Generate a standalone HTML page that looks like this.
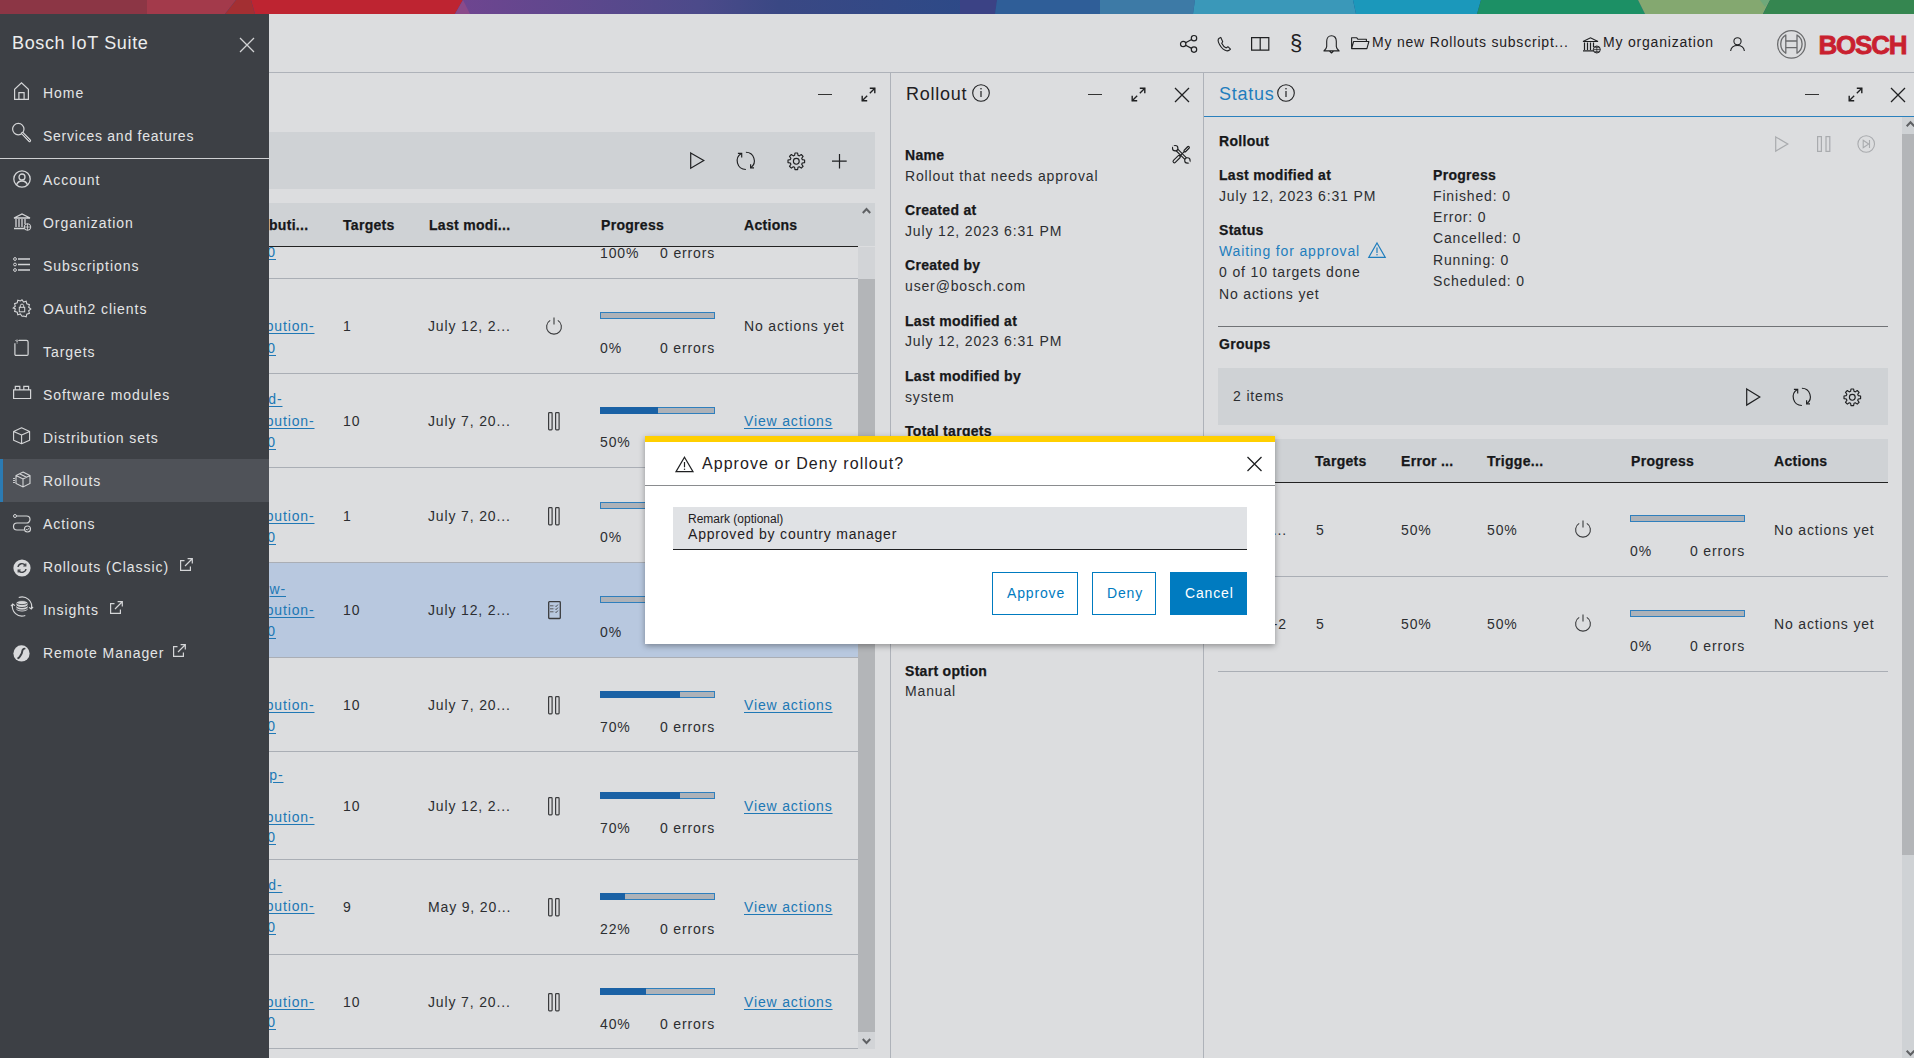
<!DOCTYPE html>
<html><head><meta charset="utf-8">
<style>
*{box-sizing:border-box;margin:0;padding:0}
html,body{width:1914px;height:1058px;overflow:hidden;background:#dcdddf;font-family:"Liberation Sans",sans-serif;color:#2c2e31}
.a{position:absolute}
.t{position:absolute;white-space:nowrap;font-size:14px;line-height:20px;letter-spacing:0.85px}
.b{font-weight:bold;letter-spacing:0.3px;color:#17181a;-webkit-text-stroke:0.25px #17181a}
.lnk{color:#2078b5;text-decoration:underline;text-underline-offset:2px}
svg{position:absolute;overflow:visible}
</style></head><body>
<!-- supergraphic -->
<svg class="a" style="left:0;top:0" width="1914" height="14">
<rect x="0" y="0" width="1914" height="14" fill="#2b4a88"/>
<rect x="0" y="0" width="150" height="14" fill="#8c3645"/>
<polygon points="147,0 236,0 225,14 147,14" fill="#a33a4b"/>
<polygon points="236,0 251,0 255,14 225,14" fill="#a32f32"/>
<polygon points="251,0 463,0 455,14 255,14" fill="#be2431"/>
<defs><linearGradient id="g1" x1="0" x2="1"><stop offset="0" stop-color="#6f4590"/><stop offset="0.45" stop-color="#4c4a8a"/><stop offset="0.6" stop-color="#3a4884"/><stop offset="1" stop-color="#2b4a88"/></linearGradient></defs>
<polygon points="463,0 995,0 995,14 455,14" fill="url(#g1)"/>
<polygon points="455,14 463,0 470,14" fill="#8a4a8a"/>
<polygon points="960,0 997,0 995,14 960,14" fill="#3b4285"/>
<polygon points="997,0 1100,0 1100,14 995,14" fill="#2f5e98"/>
<polygon points="1100,0 1195,0 1193,14 1100,14" fill="#3d7aa6"/>
<polygon points="1195,0 1353,0 1356,14 1193,14" fill="#3a98b9"/>
<polygon points="1353,0 1481,0 1477,14 1356,14" fill="#1b98bb"/>
<polygon points="1481,0 1638,0 1645,14 1477,14" fill="#1c9065"/>
<polygon points="1638,0 1770,0 1763,14 1645,14" fill="#84a870"/>
<polygon points="1760,0 1770,0 1765,7" fill="#6ea87a"/>
<polygon points="1770,0 1914,0 1914,14 1763,14" fill="#358650"/>
</svg>
<!-- header -->
<div class="a" style="left:0;top:14px;width:1914px;height:58px;background:#dcdddf"></div>
<div class="a" style="left:0;top:72px;width:1914px;height:1px;background:#aeb2b9"></div>
<!-- panel dividers -->
<div class="a" style="left:890px;top:73px;width:1px;height:985px;background:#aeb2b9"></div>
<div class="a" style="left:1203px;top:73px;width:1px;height:985px;background:#aeb2b9"></div>
<!-- sidebar -->


<!--P1-->
<div class="a" style="left:818px;top:94px;width:14px;height:1.3px;background:#333"></div>
<svg style="left:861px;top:87px" width="15" height="15"><path d="M1.2 13.8L6.2 8.8 M8.8 6.2L13.8 1.2" stroke="#1f2022" stroke-width="1.3"/><path d="M8.8 1.2h5v5 M1.2 8.8v5h5" fill="none" stroke="#1f2022" stroke-width="1.4"/></svg>
<div class="a" style="left:269px;top:132px;width:606px;height:57px;background:#cfd2d5"></div>
<svg style="left:690px;top:152px" width="15" height="18"><path d="M0.7 0.9L13.8 8.6 0.7 16.3z" fill="none" stroke="#1f2022" stroke-width="1.2" stroke-linejoin="miter"/></svg>
<svg style="left:736px;top:152px" width="19" height="19"><path d="M5.3 1.4A8.7 8.7 0 0 0 9.9 17.5 M9.9 0.3A8.5 8.5 0 0 1 14.9 15.6" fill="none" stroke="#1f2022" stroke-width="1.15"/><path d="M1.9 1.3H5.7V5.6 M14.6 12.2V15.8H18" fill="none" stroke="#1f2022" stroke-width="1.15"/></svg>
<svg style="left:787px;top:152px" width="19" height="19"><polygon points="7.59,3.34 7.99,1.00 10.61,1.00 11.01,3.34 12.31,3.88 14.24,2.50 16.10,4.36 14.72,6.29 15.26,7.59 17.60,7.99 17.60,10.61 15.26,11.01 14.72,12.31 16.10,14.24 14.24,16.10 12.31,14.72 11.01,15.26 10.61,17.60 7.99,17.60 7.59,15.26 6.29,14.72 4.36,16.10 2.50,14.24 3.88,12.31 3.34,11.01 1.00,10.61 1.00,7.99 3.34,7.59 3.88,6.29 2.50,4.36 4.36,2.50 6.29,3.88" fill="none" stroke="#1f2022" stroke-width="1.15" stroke-linejoin="round"/><circle cx="9.3" cy="9.3" r="2.9" fill="none" stroke="#1f2022" stroke-width="1.15"/></svg>
<svg style="left:832px;top:154px" width="15" height="15"><path d="M7.5 0v14.5M0 7.2h14.7" stroke="#1f2022" stroke-width="1.2"/></svg>
<div class="a" style="left:269px;top:203px;width:606px;height:43px;background:#cfd2d5"></div>
<div class="a" style="left:269px;top:246px;width:589px;height:1px;background:#222"></div>
<div class="t b" style="left:269px;top:215px">buti...</div>
<div class="t b" style="left:343px;top:215px">Targets</div>
<div class="t b" style="left:429px;top:215px">Last modi...</div>
<div class="t b" style="left:601px;top:215px">Progress</div>
<div class="t b" style="left:744px;top:215px">Actions</div>
<div class="a" style="left:858px;top:247px;width:17px;height:802px;background:#d2d4d7"></div>
<div class="a" style="left:858px;top:279px;width:17px;height:753px;background:#b3b5b8"></div>
<svg style="left:862px;top:207px" width="9" height="7"><path d="M0.8 6L4.5 2 8.2 6" fill="none" stroke="#5f6164" stroke-width="2"/></svg>
<svg style="left:862px;top:1038px" width="9" height="7"><path d="M0.8 1L4.5 5 8.2 1" fill="none" stroke="#5f6164" stroke-width="2"/></svg>
<div class="a" style="left:269px;top:278px;width:589px;height:1px;background:#aaaeb5"></div>
<div class="a" style="left:269px;top:373px;width:589px;height:1px;background:#aaaeb5"></div>
<div class="a" style="left:269px;top:467px;width:589px;height:1px;background:#aaaeb5"></div>
<div class="a" style="left:269px;top:562px;width:589px;height:1px;background:#aaaeb5"></div>
<div class="a" style="left:269px;top:657px;width:589px;height:1px;background:#aaaeb5"></div>
<div class="a" style="left:269px;top:751px;width:589px;height:1px;background:#aaaeb5"></div>
<div class="a" style="left:269px;top:859px;width:589px;height:1px;background:#aaaeb5"></div>
<div class="a" style="left:269px;top:954px;width:589px;height:1px;background:#aaaeb5"></div>
<div class="a" style="left:269px;top:1048px;width:589px;height:1px;background:#aaaeb5"></div>
<div class="a" style="left:269px;top:563px;width:589px;height:94px;background:#b8c8df"></div>
<div class="t lnk" style="right:1638px;top:242px">0</div>
<div class="t" style="left:600px;top:243px;">100%</div>
<div class="t" style="left:660px;top:243px;">0 errors</div>
<div class="t lnk" style="right:1599.5px;top:316px">bution-</div>
<div class="t lnk" style="right:1638px;top:338px">0</div>
<div class="t" style="left:343px;top:316px;">1</div>
<div class="t" style="left:428px;top:316px;">July 12, 2...</div>
<svg style="left:545px;top:317px" width="18" height="18"><path d="M5.2 3.4A7.4 7.4 0 1 0 12.8 3.4" fill="none" stroke="#3a3b3d" stroke-width="1.1"/><path d="M9 0.5v7" stroke="#3a3b3d" stroke-width="1.1"/></svg>
<div class="a" style="left:600px;top:312px;width:115px;height:7px;background:#aeb2b8;border:1px solid #2f7fbd"></div>
<div class="t" style="left:600px;top:338px;">0%</div>
<div class="t" style="right:1199px;top:338px">0 errors</div>
<div class="t" style="left:744px;top:316px;">No actions yet</div>
<div class="t lnk" style="right:1631.5px;top:389px">d-</div>
<div class="t lnk" style="right:1599.5px;top:411px">bution-</div>
<div class="t lnk" style="right:1638px;top:432px">0</div>
<div class="t" style="left:343px;top:411px;">10</div>
<div class="t" style="left:428px;top:411px;">July 7, 20...</div>
<svg style="left:548px;top:412px" width="13" height="19"><rect x="0.6" y="0.6" width="3.5" height="17.3" rx="0.8" fill="none" stroke="#3a3b3d" stroke-width="1.2"/><rect x="7.6" y="0.6" width="3.5" height="17.3" rx="0.8" fill="none" stroke="#3a3b3d" stroke-width="1.2"/></svg>
<div class="a" style="left:600px;top:407px;width:115px;height:7px;background:#aeb2b8;border:1px solid #2f7fbd"></div><div class="a" style="left:600px;top:407px;width:58px;height:7px;background:#1a61a5"></div>
<div class="t" style="left:600px;top:432px;">50%</div>
<div class="t" style="right:1199px;top:432px">0 errors</div>
<div class="t lnk" style="left:744px;top:411px">View actions</div>
<div class="t lnk" style="right:1599.5px;top:506px">bution-</div>
<div class="t lnk" style="right:1638px;top:527px">0</div>
<div class="t" style="left:343px;top:506px;">1</div>
<div class="t" style="left:428px;top:506px;">July 7, 20...</div>
<svg style="left:548px;top:507px" width="13" height="19"><rect x="0.6" y="0.6" width="3.5" height="17.3" rx="0.8" fill="none" stroke="#3a3b3d" stroke-width="1.2"/><rect x="7.6" y="0.6" width="3.5" height="17.3" rx="0.8" fill="none" stroke="#3a3b3d" stroke-width="1.2"/></svg>
<div class="a" style="left:600px;top:502px;width:115px;height:7px;background:#aeb2b8;border:1px solid #2f7fbd"></div>
<div class="t" style="left:600px;top:527px;">0%</div>
<div class="t" style="right:1199px;top:527px">0 errors</div>
<div class="t lnk" style="left:744px;top:506px">View actions</div>
<div class="t lnk" style="right:1628px;top:579px">w-</div>
<div class="t lnk" style="right:1599.5px;top:600px">bution-</div>
<div class="t lnk" style="right:1638px;top:621px">0</div>
<div class="t" style="left:343px;top:600px;">10</div>
<div class="t" style="left:428px;top:600px;">July 12, 2...</div>
<svg style="left:548px;top:601px" width="14" height="19"><rect x="0.7" y="0.7" width="11.6" height="16.8" rx="0.8" fill="none" stroke="#3a3b3d" stroke-width="1.3"/><path d="M2 4.8h3.5 M2 7.8h3.5 M2 10.8h3.5" stroke="#5a5b5d" stroke-width="1"/><path d="M7.3 4.8l0.8 0.8 1.8-2 M7.3 7.8l0.8 0.8 1.8-2 M7.3 10.8l0.8 0.8 1.8-2" fill="none" stroke="#3a3b3d" stroke-width="0.9"/></svg>
<div class="a" style="left:600px;top:596px;width:115px;height:7px;background:#aeb2b8;border:1px solid #2f7fbd"></div>
<div class="t" style="left:600px;top:622px;">0%</div>
<div class="t" style="right:1199px;top:622px">0 errors</div>
<div class="t lnk" style="left:744px;top:600px">View actions</div>
<div class="t lnk" style="right:1599.5px;top:695px">bution-</div>
<div class="t lnk" style="right:1638px;top:716px">0</div>
<div class="t" style="left:343px;top:695px;">10</div>
<div class="t" style="left:428px;top:695px;">July 7, 20...</div>
<svg style="left:548px;top:696px" width="13" height="19"><rect x="0.6" y="0.6" width="3.5" height="17.3" rx="0.8" fill="none" stroke="#3a3b3d" stroke-width="1.2"/><rect x="7.6" y="0.6" width="3.5" height="17.3" rx="0.8" fill="none" stroke="#3a3b3d" stroke-width="1.2"/></svg>
<div class="a" style="left:600px;top:691px;width:115px;height:7px;background:#aeb2b8;border:1px solid #2f7fbd"></div><div class="a" style="left:600px;top:691px;width:80px;height:7px;background:#1a61a5"></div>
<div class="t" style="left:600px;top:717px;">70%</div>
<div class="t" style="right:1199px;top:717px">0 errors</div>
<div class="t lnk" style="left:744px;top:695px">View actions</div>
<div class="t lnk" style="right:1630.5px;top:765px">p-</div>
<div class="t lnk" style="right:1599.5px;top:807px">bution-</div>
<div class="t lnk" style="right:1638px;top:827px">0</div>
<div class="t" style="left:343px;top:796px;">10</div>
<div class="t" style="left:428px;top:796px;">July 12, 2...</div>
<svg style="left:548px;top:797px" width="13" height="19"><rect x="0.6" y="0.6" width="3.5" height="17.3" rx="0.8" fill="none" stroke="#3a3b3d" stroke-width="1.2"/><rect x="7.6" y="0.6" width="3.5" height="17.3" rx="0.8" fill="none" stroke="#3a3b3d" stroke-width="1.2"/></svg>
<div class="a" style="left:600px;top:792px;width:115px;height:7px;background:#aeb2b8;border:1px solid #2f7fbd"></div><div class="a" style="left:600px;top:792px;width:80px;height:7px;background:#1a61a5"></div>
<div class="t" style="left:600px;top:818px;">70%</div>
<div class="t" style="right:1199px;top:818px">0 errors</div>
<div class="t lnk" style="left:744px;top:796px">View actions</div>
<div class="t lnk" style="right:1631.5px;top:875px">d-</div>
<div class="t lnk" style="right:1599.5px;top:896px">bution-</div>
<div class="t lnk" style="right:1638px;top:917px">0</div>
<div class="t" style="left:343px;top:897px;">9</div>
<div class="t" style="left:428px;top:897px;">May 9, 20...</div>
<svg style="left:548px;top:898px" width="13" height="19"><rect x="0.6" y="0.6" width="3.5" height="17.3" rx="0.8" fill="none" stroke="#3a3b3d" stroke-width="1.2"/><rect x="7.6" y="0.6" width="3.5" height="17.3" rx="0.8" fill="none" stroke="#3a3b3d" stroke-width="1.2"/></svg>
<div class="a" style="left:600px;top:893px;width:115px;height:7px;background:#aeb2b8;border:1px solid #2f7fbd"></div><div class="a" style="left:600px;top:893px;width:25px;height:7px;background:#1a61a5"></div>
<div class="t" style="left:600px;top:919px;">22%</div>
<div class="t" style="right:1199px;top:919px">0 errors</div>
<div class="t lnk" style="left:744px;top:897px">View actions</div>
<div class="t lnk" style="right:1599.5px;top:992px">bution-</div>
<div class="t lnk" style="right:1638px;top:1012px">0</div>
<div class="t" style="left:343px;top:992px;">10</div>
<div class="t" style="left:428px;top:992px;">July 7, 20...</div>
<svg style="left:548px;top:993px" width="13" height="19"><rect x="0.6" y="0.6" width="3.5" height="17.3" rx="0.8" fill="none" stroke="#3a3b3d" stroke-width="1.2"/><rect x="7.6" y="0.6" width="3.5" height="17.3" rx="0.8" fill="none" stroke="#3a3b3d" stroke-width="1.2"/></svg>
<div class="a" style="left:600px;top:988px;width:115px;height:7px;background:#aeb2b8;border:1px solid #2f7fbd"></div><div class="a" style="left:600px;top:988px;width:46px;height:7px;background:#1a61a5"></div>
<div class="t" style="left:600px;top:1014px;">40%</div>
<div class="t" style="right:1199px;top:1014px">0 errors</div>
<div class="t lnk" style="left:744px;top:992px">View actions</div>
<!--/P1-->
<!--P23-->
<div class="t" style="left:906px;top:81px;font-size:18px;line-height:26px;letter-spacing:0.75px;color:#1f2022">Rollout</div>
<svg style="left:972px;top:84px" width="18" height="18"><circle cx="9" cy="9" r="8.3" fill="none" stroke="#1f2022" stroke-width="1.1"/><path d="M9 7v6" stroke="#1f2022" stroke-width="1.2"/><circle cx="9" cy="4.8" r="0.8" fill="#1f2022"/></svg>
<div class="a" style="left:1088px;top:94px;width:14px;height:1.3px;background:#333"></div>
<svg style="left:1131px;top:87px" width="15" height="15"><path d="M1.2 13.8L6.2 8.8 M8.8 6.2L13.8 1.2" stroke="#1f2022" stroke-width="1.3"/><path d="M8.8 1.2h5v5 M1.2 8.8v5h5" fill="none" stroke="#1f2022" stroke-width="1.4"/></svg>
<svg style="left:1175px;top:88px" width="14" height="14"><path d="M0 0L14 14M14 0L0 14" stroke="#1f2022" stroke-width="1.3"/></svg>
<svg style="left:1172px;top:145px" width="19" height="19"><path d="M4.2 4.2L14.4 14.4" stroke="#1f2022" stroke-width="3.4" stroke-linecap="round"/><path d="M4.2 4.2L14.4 14.4" stroke="#dcdddf" stroke-width="1.2" stroke-linecap="round"/><circle cx="3.2" cy="3.2" r="2.7" fill="#dcdddf" stroke="#1f2022" stroke-width="1.1"/><circle cx="15.4" cy="15.4" r="2.7" fill="#dcdddf" stroke="#1f2022" stroke-width="1.1"/><path d="M0.6 0.6L3.6 3.6 M18.2 18.2L15 15" stroke="#dcdddf" stroke-width="1.7"/><path d="M2.4 16.4L7 11.8" stroke="#1f2022" stroke-width="3.8" stroke-linecap="round"/><path d="M2.4 16.4L7 11.8" stroke="#dcdddf" stroke-width="1.6" stroke-linecap="round"/><path d="M7.5 11.3L12.5 6.3" stroke="#1f2022" stroke-width="1.1"/><path d="M13 5.8L16.3 2.5" stroke="#1f2022" stroke-width="3.2" stroke-linecap="round"/><path d="M13 5.8L16.3 2.5" stroke="#dcdddf" stroke-width="1.0" stroke-linecap="round"/></svg>
<div class="t b" style="left:905px;top:145px">Name</div>
<div class="t" style="left:905px;top:166px">Rollout that needs approval</div>
<div class="t b" style="left:905px;top:200px">Created at</div>
<div class="t" style="left:905px;top:221px">July 12, 2023 6:31 PM</div>
<div class="t b" style="left:905px;top:255px">Created by</div>
<div class="t" style="left:905px;top:276px">user@bosch.com</div>
<div class="t b" style="left:905px;top:311px">Last modified at</div>
<div class="t" style="left:905px;top:331px">July 12, 2023 6:31 PM</div>
<div class="t b" style="left:905px;top:366px">Last modified by</div>
<div class="t" style="left:905px;top:387px">system</div>
<div class="t b" style="left:905px;top:421px">Total targets</div>
<div class="t" style="left:905px;top:441px">10</div>
<div class="t b" style="left:905px;top:475px">Distribution set</div>
<div class="t" style="left:905px;top:496px">Software 1.0</div>
<div class="t b" style="left:905px;top:530px">Target filter</div>
<div class="t" style="left:905px;top:551px">All targets</div>
<div class="t b" style="left:905px;top:585px">Action type</div>
<div class="t" style="left:905px;top:606px">Forced</div>
<div class="t b" style="left:905px;top:661px">Start option</div>
<div class="t" style="left:905px;top:681px">Manual</div>
<div class="t" style="left:1219px;top:81px;font-size:18px;line-height:26px;letter-spacing:0.75px;color:#1f7dbd">Status</div>
<svg style="left:1277px;top:84px" width="18" height="18"><circle cx="9" cy="9" r="8.3" fill="none" stroke="#1f2022" stroke-width="1.1"/><path d="M9 7v6" stroke="#1f2022" stroke-width="1.2"/><circle cx="9" cy="4.8" r="0.8" fill="#1f2022"/></svg>
<div class="a" style="left:1204px;top:116px;width:710px;height:1px;background:#2a80bd"></div>
<div class="a" style="left:1805px;top:94px;width:14px;height:1.3px;background:#333"></div>
<svg style="left:1848px;top:87px" width="15" height="15"><path d="M1.2 13.8L6.2 8.8 M8.8 6.2L13.8 1.2" stroke="#1f2022" stroke-width="1.3"/><path d="M8.8 1.2h5v5 M1.2 8.8v5h5" fill="none" stroke="#1f2022" stroke-width="1.4"/></svg>
<svg style="left:1891px;top:88px" width="14" height="14"><path d="M0 0L14 14M14 0L0 14" stroke="#1f2022" stroke-width="1.3"/></svg>
<div class="t b" style="left:1219px;top:131px">Rollout</div>
<svg style="left:1775px;top:136px" width="14" height="16"><path d="M0.7 0.9L12.8 8.0L0.7 15.1z" fill="none" stroke="#a9abae" stroke-width="1.2"/></svg>
<svg style="left:1817px;top:136px" width="14" height="16"><rect x="0.6" y="0.6" width="3.8" height="14.8" fill="none" stroke="#a9abae" stroke-width="1.2"/><rect x="9" y="0.6" width="3.8" height="14.8" fill="none" stroke="#a9abae" stroke-width="1.2"/></svg>
<svg style="left:1857px;top:135px" width="19" height="18"><circle cx="9.2" cy="9" r="8.3" fill="none" stroke="#a9abae" stroke-width="1.1"/><path d="M6.2 5.2l5.5 3.8-5.5 3.8z M12.5 5v8" fill="none" stroke="#a9abae" stroke-width="1.1"/></svg>
<div class="t b" style="left:1219px;top:165px">Last modified at</div>
<div class="t" style="left:1219px;top:186px">July 12, 2023 6:31 PM</div>
<div class="t b" style="left:1219px;top:220px">Status</div>
<div class="t" style="left:1219px;top:262px">0 of 10 targets done</div>
<div class="t" style="left:1219px;top:284px">No actions yet</div>
<div class="t" style="left:1219px;top:241px;color:#1f7dbd">Waiting for approval</div>
<svg style="left:1368px;top:242px" width="18" height="16"><path d="M9 1L17.2 15.3H0.8z" fill="none" stroke="#1f7dbd" stroke-width="1.2" stroke-linejoin="miter"/><path d="M9 5.5v5.5" stroke="#1f7dbd" stroke-width="1.2"/><circle cx="9" cy="12.8" r="0.75" fill="#1f7dbd"/></svg>
<div class="t b" style="left:1433px;top:165px">Progress</div>
<div class="t" style="left:1433px;top:186px">Finished: 0</div>
<div class="t" style="left:1433px;top:207px">Error: 0</div>
<div class="t" style="left:1433px;top:228px">Cancelled: 0</div>
<div class="t" style="left:1433px;top:250px">Running: 0</div>
<div class="t" style="left:1433px;top:271px">Scheduled: 0</div>
<div class="a" style="left:1218px;top:326px;width:670px;height:1px;background:#707276"></div>
<div class="t b" style="left:1219px;top:334px">Groups</div>
<div class="a" style="left:1218px;top:368px;width:670px;height:57px;background:#cfd2d5"></div>
<div class="t" style="left:1233px;top:386px">2 items</div>
<svg style="left:1746px;top:388px" width="15" height="18"><path d="M0.7 0.9L13.8 9.0L0.7 17.1z" fill="none" stroke="#1f2022" stroke-width="1.2"/></svg>
<svg style="left:1792px;top:388px" width="19" height="19"><path d="M5.3 1.4A8.7 8.7 0 0 0 9.9 17.5 M9.9 0.3A8.5 8.5 0 0 1 14.9 15.6" fill="none" stroke="#1f2022" stroke-width="1.15"/><path d="M1.9 1.3H5.7V5.6 M14.6 12.2V15.8H18" fill="none" stroke="#1f2022" stroke-width="1.15"/></svg>
<svg style="left:1843px;top:388px" width="19" height="19"><polygon points="7.59,3.34 7.99,1.00 10.61,1.00 11.01,3.34 12.31,3.88 14.24,2.50 16.10,4.36 14.72,6.29 15.26,7.59 17.60,7.99 17.60,10.61 15.26,11.01 14.72,12.31 16.10,14.24 14.24,16.10 12.31,14.72 11.01,15.26 10.61,17.60 7.99,17.60 7.59,15.26 6.29,14.72 4.36,16.10 2.50,14.24 3.88,12.31 3.34,11.01 1.00,10.61 1.00,7.99 3.34,7.59 3.88,6.29 2.50,4.36 4.36,2.50 6.29,3.88" fill="none" stroke="#1f2022" stroke-width="1.15" stroke-linejoin="round"/><circle cx="9.3" cy="9.3" r="2.9" fill="none" stroke="#1f2022" stroke-width="1.15"/></svg>
<div class="a" style="left:1218px;top:439px;width:670px;height:43px;background:#cfd2d5"></div>
<div class="a" style="left:1218px;top:482px;width:670px;height:1px;background:#222"></div>
<div class="t b" style="left:1315px;top:451px">Targets</div>
<div class="t b" style="left:1401px;top:451px">Error ...</div>
<div class="t b" style="left:1487px;top:451px">Trigge...</div>
<div class="t b" style="left:1631px;top:451px">Progress</div>
<div class="t b" style="left:1774px;top:451px">Actions</div>
<div class="t" style="right:627px;top:520px">...</div>
<div class="t" style="left:1316px;top:520px;">5</div>
<div class="t" style="left:1401px;top:520px;">50%</div>
<div class="t" style="left:1487px;top:520px;">50%</div>
<svg style="left:1574px;top:520px" width="18" height="18"><path d="M5.2 3.4A7.4 7.4 0 1 0 12.8 3.4" fill="none" stroke="#3a3b3d" stroke-width="1.1"/><path d="M9 0.5v7" stroke="#3a3b3d" stroke-width="1.1"/></svg>
<div class="a" style="left:1630px;top:515px;width:115px;height:7px;background:#aeb2b8;border:1px solid #2f7fbd"></div>
<div class="t" style="left:1630px;top:541px;">0%</div>
<div class="t" style="right:169px;top:541px">0 errors</div>
<div class="t" style="left:1774px;top:520px;">No actions yet</div>
<div class="t" style="right:627px;top:614px">-2</div>
<div class="t" style="left:1316px;top:614px;">5</div>
<div class="t" style="left:1401px;top:614px;">50%</div>
<div class="t" style="left:1487px;top:614px;">50%</div>
<svg style="left:1574px;top:614px" width="18" height="18"><path d="M5.2 3.4A7.4 7.4 0 1 0 12.8 3.4" fill="none" stroke="#3a3b3d" stroke-width="1.1"/><path d="M9 0.5v7" stroke="#3a3b3d" stroke-width="1.1"/></svg>
<div class="a" style="left:1630px;top:610px;width:115px;height:7px;background:#aeb2b8;border:1px solid #2f7fbd"></div>
<div class="t" style="left:1630px;top:636px;">0%</div>
<div class="t" style="right:169px;top:636px">0 errors</div>
<div class="t" style="left:1774px;top:614px;">No actions yet</div>
<div class="a" style="left:1218px;top:576px;width:670px;height:1px;background:#aaaeb5"></div>
<div class="a" style="left:1218px;top:671px;width:670px;height:1px;background:#aaaeb5"></div>
<div class="a" style="left:1902px;top:117px;width:12px;height:941px;background:#cfd2d5"></div>
<div class="a" style="left:1902px;top:134px;width:12px;height:721px;background:#b3b5b8"></div>
<svg style="left:1906px;top:121px" width="9" height="6"><path d="M0.7 5.3L4.5 1.3 8.3 5.3" fill="none" stroke="#5f6164" stroke-width="2"/></svg>
<svg style="left:1906px;top:1050px" width="9" height="6"><path d="M0.7 0.7L4.5 4.7 8.3 0.7" fill="none" stroke="#5f6164" stroke-width="2"/></svg>
<!--/P23-->
<!--HDR-->
<svg style="left:1180px;top:35px" width="18" height="18"><circle cx="14" cy="3.2" r="2.7" fill="none" stroke="#1f2022" stroke-width="1.2"/><circle cx="3.2" cy="9" r="2.7" fill="none" stroke="#1f2022" stroke-width="1.2"/><circle cx="14" cy="14.6" r="2.7" fill="none" stroke="#1f2022" stroke-width="1.2"/><path d="M5.6 7.8L11.6 4.4M5.6 10.2L11.6 13.4" stroke="#1f2022" stroke-width="1.2"/></svg>
<svg style="left:1217px;top:37px" width="15" height="15"><path d="M2.2 1.2c-1.6 1-1.5 3 0.3 6.3 2 3.5 4.6 5.8 7 6.3 1.2 0.2 2-0.1 3-0.8l1-0.9-2.6-2.4-1.6 1.2c-1.5-0.5-3.8-2.9-4.6-4.6l1-1.5L3.8 0.4z" fill="none" stroke="#1f2022" stroke-width="1.1" stroke-linejoin="round"/></svg>
<svg style="left:1251px;top:37px" width="19" height="14"><path d="M0.6 0.6h17.2v12.6H0.6z M9.2 0.6v13.2" fill="none" stroke="#1f2022" stroke-width="1.2"/></svg>
<div class="t" style="left:1290px;top:29px;font-size:22px;line-height:28px;color:#1f2022;letter-spacing:0">§</div>
<svg style="left:1323px;top:35px" width="18" height="19"><path d="M8.5 0.8c-3 0-4.8 2.3-4.8 5.5v5.2c0 1.6-1.3 3-2.8 4.4h15.2c-1.5-1.4-2.8-2.8-2.8-4.4V6.3c0-3.2-1.8-5.5-4.8-5.5z M6.5 16.2l2 1.8 2-1.8" fill="none" stroke="#1f2022" stroke-width="1.1" stroke-linejoin="round"/></svg>
<svg style="left:1351px;top:37px" width="19" height="13"><path d="M0.6 11.6V0.8h5.2l1.2 1.5h8.4v2.2 M0.6 11.6l2-7.1h15.3l-2 7.1z" fill="none" stroke="#1f2022" stroke-width="1.1" stroke-linejoin="round"/></svg>
<div class="t" style="left:1372px;top:32px;color:#1f2022;letter-spacing:0.8px">My new Rollouts subscript...</div>
<svg style="left:1582px;top:37px" width="20" height="17"><path d="M1 4.5L8.5 0.8 16 4.5z M1 13.8h11 M2.5 5.5v7.5 M5.5 5.5v7.5 M8.5 5.5v7.5 M11.5 5.5v4.5" fill="none" stroke="#1f2022" stroke-width="1.2"/><circle cx="14.8" cy="12.5" r="3.5" fill="#dcdddf" stroke="#1f2022" stroke-width="1"/><path d="M11.3 12.5h7 M14.8 9v7 M12.3 10.6h5 M12.3 14.4h5" stroke="#1f2022" stroke-width="0.7"/></svg>
<div class="t" style="left:1603px;top:32px;color:#1f2022;letter-spacing:0.8px">My organization</div>
<svg style="left:1730px;top:37px" width="15" height="14"><circle cx="7.5" cy="4.3" r="3.6" fill="none" stroke="#1f2022" stroke-width="1.1"/><path d="M0.6 14c0.5-3.6 3.2-5.5 6.9-5.5s6.4 1.9 6.9 5.5" fill="none" stroke="#1f2022" stroke-width="1.1"/></svg>
<svg style="left:1777px;top:30px" width="29" height="29"><circle cx="14.4" cy="14.4" r="13.8" fill="none" stroke="#6a6b6d" stroke-width="1.3"/><path d="M8.8 5A10.7 10.7 0 0 0 8.8 23.2Z M20 5A10.7 10.7 0 0 1 20 23.2Z" fill="none" stroke="#6a6b6d" stroke-width="1.3" stroke-linejoin="round"/><path d="M8.8 11H20 M8.8 17.7H20" stroke="#6a6b6d" stroke-width="1.3"/></svg>
<div class="a" style="left:1818.5px;top:30.5px;font-size:26px;line-height:28px;font-weight:bold;color:#c9202f;letter-spacing:-1.2px;white-space:nowrap;-webkit-text-stroke:0.8px #c9202f">BOSCH</div>
<!--/HDR-->

<div class="a" style="left:0;top:0;width:1914px;height:1058px;z-index:10">
<div class="a" id="sidebar" style="left:0;top:14px;width:269px;height:1044px;background:#3d4045"></div>
<!--SB-->
<div class="t" style="left:12px;top:30px;font-size:18px;line-height:26px;color:#eceded;letter-spacing:0.65px">Bosch IoT Suite</div>
<svg style="left:240px;top:38px" width="14" height="14"><path d="M0 0L14 14M14 0L0 14" stroke="#d2d3d5" stroke-width="1.3"/></svg>
<div class="a" style="left:0;top:158px;width:269px;height:1px;background:#cfd0d2"></div>
<svg style="left:14px;top:82px" width="16" height="19"><path d="M0.6 17.4V7.2L7.5 0.8l6.9 6.4v10.2z M4.9 17.4V10.6h5.2v6.8" fill="none" stroke="#d4d5d7" stroke-width="1.2" stroke-linejoin="miter"/></svg>
<div class="t" style="left:43px;top:83px;color:#e4e5e6;letter-spacing:0.95px">Home</div>
<svg style="left:12px;top:122px" width="20" height="21"><circle cx="6.3" cy="7.1" r="5.7" fill="none" stroke="#d4d5d7" stroke-width="1.2"/><path d="M10.5 11.3L17.6 18.6" stroke="#d4d5d7" stroke-width="3" stroke-linecap="round"/><path d="M10.5 11.3L17.6 18.6" stroke="#3d4045" stroke-width="0.9" stroke-linecap="round"/></svg>
<div class="t" style="left:43px;top:126px;color:#e4e5e6;letter-spacing:0.75px">Services and features</div>
<svg style="left:13px;top:170px" width="18" height="18"><circle cx="9" cy="9" r="8.2" fill="none" stroke="#d4d5d7" stroke-width="1.3"/><circle cx="9" cy="7" r="3" fill="none" stroke="#d4d5d7" stroke-width="1.3"/><path d="M3.5 15c1-3 3-4 5.5-4s4.5 1 5.5 4" fill="none" stroke="#d4d5d7" stroke-width="1.3"/></svg>
<div class="t" style="left:43px;top:170px;color:#e4e5e6;letter-spacing:0.95px">Account</div>
<svg style="left:13px;top:213px" width="18" height="18"><path d="M1 5L9 1l8 4z M1 15.5h12 M3 6v8 M6 6v8 M9 6v8 M12 6v5" fill="none" stroke="#d4d5d7" stroke-width="1.3"/><circle cx="14.5" cy="14" r="3.3" fill="#3d4045" stroke="#d4d5d7" stroke-width="1"/><path d="M11.2 14h6.6 M14.5 10.7v6.6" stroke="#d4d5d7" stroke-width="0.8"/></svg>
<div class="t" style="left:43px;top:213px;color:#e4e5e6;letter-spacing:0.95px">Organization</div>
<svg style="left:13px;top:256px" width="18" height="18"><circle cx="2" cy="3" r="1.4" fill="none" stroke="#d4d5d7" stroke-width="1"/><circle cx="2" cy="8.5" r="1.4" fill="none" stroke="#d4d5d7" stroke-width="1"/><circle cx="2" cy="14" r="1.4" fill="none" stroke="#d4d5d7" stroke-width="1"/><path d="M5 3h12 M5 8.5h12 M5 14h12" stroke="#d4d5d7" stroke-width="1.3"/></svg>
<div class="t" style="left:43px;top:256px;color:#e4e5e6;letter-spacing:0.95px">Subscriptions</div>
<svg style="left:13px;top:299px" width="18" height="18"><path d="M9 0.8l1.6 2.2 2.6-0.7 0.6 2.6 2.6 0.7-0.7 2.6 2.1 1.8-2.1 1.8 0.7 2.6-2.6 0.7-0.6 2.6-2.6-0.7L9 17.2l-1.6-2.2-2.6 0.7-0.6-2.6-2.6-0.7 0.7-2.6L0.2 9l2.1-1.8-0.7-2.6 2.6-0.7 0.6-2.6 2.6 0.7z" fill="none" stroke="#d4d5d7" stroke-width="1.1"/><rect x="6.3" y="8.3" width="5.4" height="4.5" fill="none" stroke="#d4d5d7" stroke-width="1"/><path d="M7.3 8.3V6.8a1.7 1.7 0 0 1 3.4 0v1.5" fill="none" stroke="#d4d5d7" stroke-width="1"/></svg>
<div class="t" style="left:43px;top:299px;color:#e4e5e6;letter-spacing:0.95px">OAuth2 clients</div>
<svg style="left:14px;top:339px" width="16" height="18"><path d="M5 1.3H12.4a1.7 1.7 0 0 1 1.7 1.7V15.2a1.1 1.1 0 0 1-1.1 1.1H2a1.1 1.1 0 0 1-1.1-1.1V4.2" fill="none" stroke="#d4d5d7" stroke-width="1.2"/><path d="M1.3 1.6a3.4 3.4 0 0 1 3.6 0 M2.2 2.8a1.7 1.7 0 0 1 1.8 0" fill="none" stroke="#d4d5d7" stroke-width="0.8"/><circle cx="3.1" cy="4" r="0.5" fill="#d4d5d7"/></svg>
<div class="t" style="left:43px;top:342px;color:#e4e5e6;letter-spacing:0.95px">Targets</div>
<svg style="left:13px;top:385px" width="19" height="15"><path d="M0.6 4.9h17v8.6H0.6z M2.3 4.9V1.3h4.5v3.6 M10.8 4.9V1.3h4.8v3.6" fill="none" stroke="#d4d5d7" stroke-width="1.2"/></svg>
<div class="t" style="left:43px;top:385px;color:#e4e5e6;letter-spacing:0.95px">Software modules</div>
<svg style="left:13px;top:427px" width="18" height="17"><path d="M8.6 0.8l8 3.6v8.8l-8 3.6-8-3.6V4.4z M0.6 4.4l8 3.6 8-3.6 M8.6 8v8.8" fill="none" stroke="#d4d5d7" stroke-width="1.1" stroke-linejoin="round"/></svg>
<div class="t" style="left:43px;top:428px;color:#e4e5e6;letter-spacing:0.95px">Distribution sets</div>
<div class="a" style="left:0;top:459px;width:269px;height:43px;background:#4f5258"></div>
<div class="a" style="left:0;top:459px;width:3px;height:43px;background:#2b7bb3"></div>
<svg style="left:13px;top:471px" width="18" height="18"><path d="M10 1l7 3.5v8L10 16 3 12.5v-8z M3 4.5L10 8l7-3.5 M10 8v8 M6.5 2.8l7 3.5" fill="none" stroke="#d4d5d7" stroke-width="1.1"/><path d="M0 7.5h2 M0 9.5h2 M0 11.5h2" stroke="#d4d5d7" stroke-width="0.9"/></svg>
<div class="t" style="left:43px;top:471px;color:#e4e5e6;letter-spacing:0.95px">Rollouts</div>
<svg style="left:13px;top:514px" width="18" height="18"><circle cx="2" cy="2" r="1.5" fill="none" stroke="#d4d5d7" stroke-width="1"/><path d="M3.5 2h10a3.5 3.5 0 0 1 0 7H4a3.5 3.5 0 0 0 0 7h7" fill="none" stroke="#d4d5d7" stroke-width="1.2"/><circle cx="14.5" cy="15" r="3" fill="#3d4045" stroke="#d4d5d7" stroke-width="1.1"/><path d="M13 15l1.2 1.2 2-2.2" fill="none" stroke="#d4d5d7" stroke-width="0.9"/></svg>
<div class="t" style="left:43px;top:514px;color:#e4e5e6;letter-spacing:0.95px">Actions</div>
<svg style="left:12.5px;top:559px" width="18" height="18"><circle cx="9" cy="9" r="8.6" fill="#d8d9db"/><path d="M5 8a4 4 0 0 1 7.3-1.5 M13 10a4 4 0 0 1-7.3 1.5" fill="none" stroke="#3d4045" stroke-width="1.4"/><path d="M12.8 4.5v2.5h-2.5 M5.2 13.5V11h2.5" fill="none" stroke="#3d4045" stroke-width="1.2"/></svg>
<div class="t" style="left:43px;top:557px;color:#e4e5e6;letter-spacing:0.95px">Rollouts (Classic)</div>
<svg style="left:180px;top:558px" width="13" height="13"><path d="M4.5 2.6H0.6V12.4H10.4V8.5" fill="none" stroke="#d4d5d7" stroke-width="1.2"/><path d="M5 8L12 1 M7.6 0.7H12.3V5.4" fill="none" stroke="#d4d5d7" stroke-width="1.2"/></svg>
<svg style="left:10.5px;top:596px" width="22" height="22"><path d="M5.4 6.6v6.6c0 1.2 2.5 2.2 5.6 2.2s5.6-1 5.6-2.2V6.6z" fill="#d4d5d7"/><ellipse cx="11" cy="6.6" rx="5.6" ry="2" fill="#d4d5d7" stroke="#3d4045" stroke-width="0.8"/><path d="M5.4 9.3c0 1.2 2.5 2.2 5.6 2.2s5.6-1 5.6-2.2 M5.4 11.9c0 1.2 2.5 2.2 5.6 2.2s5.6-1 5.6-2.2" fill="none" stroke="#3d4045" stroke-width="0.9"/><path d="M7.72 1.48A9.6 9.6 0 0 1 20.27 12.98 M14.28 19.52A9.6 9.6 0 0 1 1.73 8.02" fill="none" stroke="#d4d5d7" stroke-width="1.15"/><path d="M18.07 11.38L20.27 12.98L22.07 10.98 M3.93 9.62L1.73 8.02L-0.07 10.02" fill="none" stroke="#d4d5d7" stroke-width="1.15"/></svg>
<div class="t" style="left:43px;top:600px;color:#e4e5e6;letter-spacing:0.95px">Insights</div>
<svg style="left:110px;top:601px" width="13" height="13"><path d="M4.5 2.6H0.6V12.4H10.4V8.5" fill="none" stroke="#d4d5d7" stroke-width="1.2"/><path d="M5 8L12 1 M7.6 0.7H12.3V5.4" fill="none" stroke="#d4d5d7" stroke-width="1.2"/></svg>
<svg style="left:13px;top:645px" width="18" height="18"><circle cx="8.5" cy="8.4" r="8.1" fill="#d8d9db"/><path d="M11.6 3.6C8.4 3.6 9.8 7.2 8.2 9.4 7.2 10.8 6.4 12.6 5.2 13.2" fill="none" stroke="#3d4045" stroke-width="1.9" stroke-linecap="round"/></svg>
<div class="t" style="left:43px;top:643px;color:#e4e5e6;letter-spacing:0.95px">Remote Manager</div>
<svg style="left:173px;top:644px" width="13" height="13"><path d="M4.5 2.6H0.6V12.4H10.4V8.5" fill="none" stroke="#d4d5d7" stroke-width="1.2"/><path d="M5 8L12 1 M7.6 0.7H12.3V5.4" fill="none" stroke="#d4d5d7" stroke-width="1.2"/></svg>
<!--/SB-->
</div>
<!--DLG-->
<div class="a" style="left:645px;top:436px;width:630px;height:208px;background:#fff;box-shadow:0 2px 6px rgba(0,0,0,0.35);z-index:20">
<div class="a" style="left:0;top:0;width:630px;height:6px;background:#ffcf00"></div>
<svg style="left:30px;top:20px" width="19" height="17"><path d="M9.5 1.2L18 15.6H1z" fill="none" stroke="#1f2022" stroke-width="1.2"/><path d="M9.5 6v5.3" stroke="#1f2022" stroke-width="1.2"/><circle cx="9.5" cy="13.2" r="0.75" fill="#1f2022"/></svg>
<div class="t" style="left:57px;top:17px;font-size:16px;line-height:22px;letter-spacing:1.05px;color:#1f2022">Approve or Deny rollout?</div>
<svg style="left:602px;top:21px" width="15" height="14"><path d="M0.5 0L14.5 14M14.5 0L0.5 14" stroke="#1f2022" stroke-width="1.3"/></svg>
<div class="a" style="left:0;top:49px;width:630px;height:1px;background:#8a8c8f"></div>
<div class="a" style="left:28px;top:71px;width:574px;height:43px;background:#e0e2e5;border-bottom:1px solid #1f2022"></div>
<div class="t" style="left:43px;top:76px;font-size:12px;line-height:14px;letter-spacing:0px;color:#1f2022">Remark (optional)</div>
<div class="t" style="left:43px;top:88px;font-size:14px;line-height:20px;letter-spacing:0.8px;color:#1f2022">Approved by country manager</div>
<div class="a" style="left:347px;top:136px;width:86px;height:43px;border:1px solid #007bc0"></div>
<div class="t" style="left:362px;top:147px;color:#007bc0;letter-spacing:0.85px">Approve</div>
<div class="a" style="left:447px;top:136px;width:64px;height:43px;border:1px solid #007bc0"></div>
<div class="t" style="left:462px;top:147px;color:#007bc0;letter-spacing:0.85px">Deny</div>
<div class="a" style="left:525px;top:136px;width:77px;height:43px;background:#007bc0"></div>
<div class="t" style="left:540px;top:147px;color:#fff;letter-spacing:0.85px">Cancel</div>
</div>
<!--/DLG-->
</body></html>
